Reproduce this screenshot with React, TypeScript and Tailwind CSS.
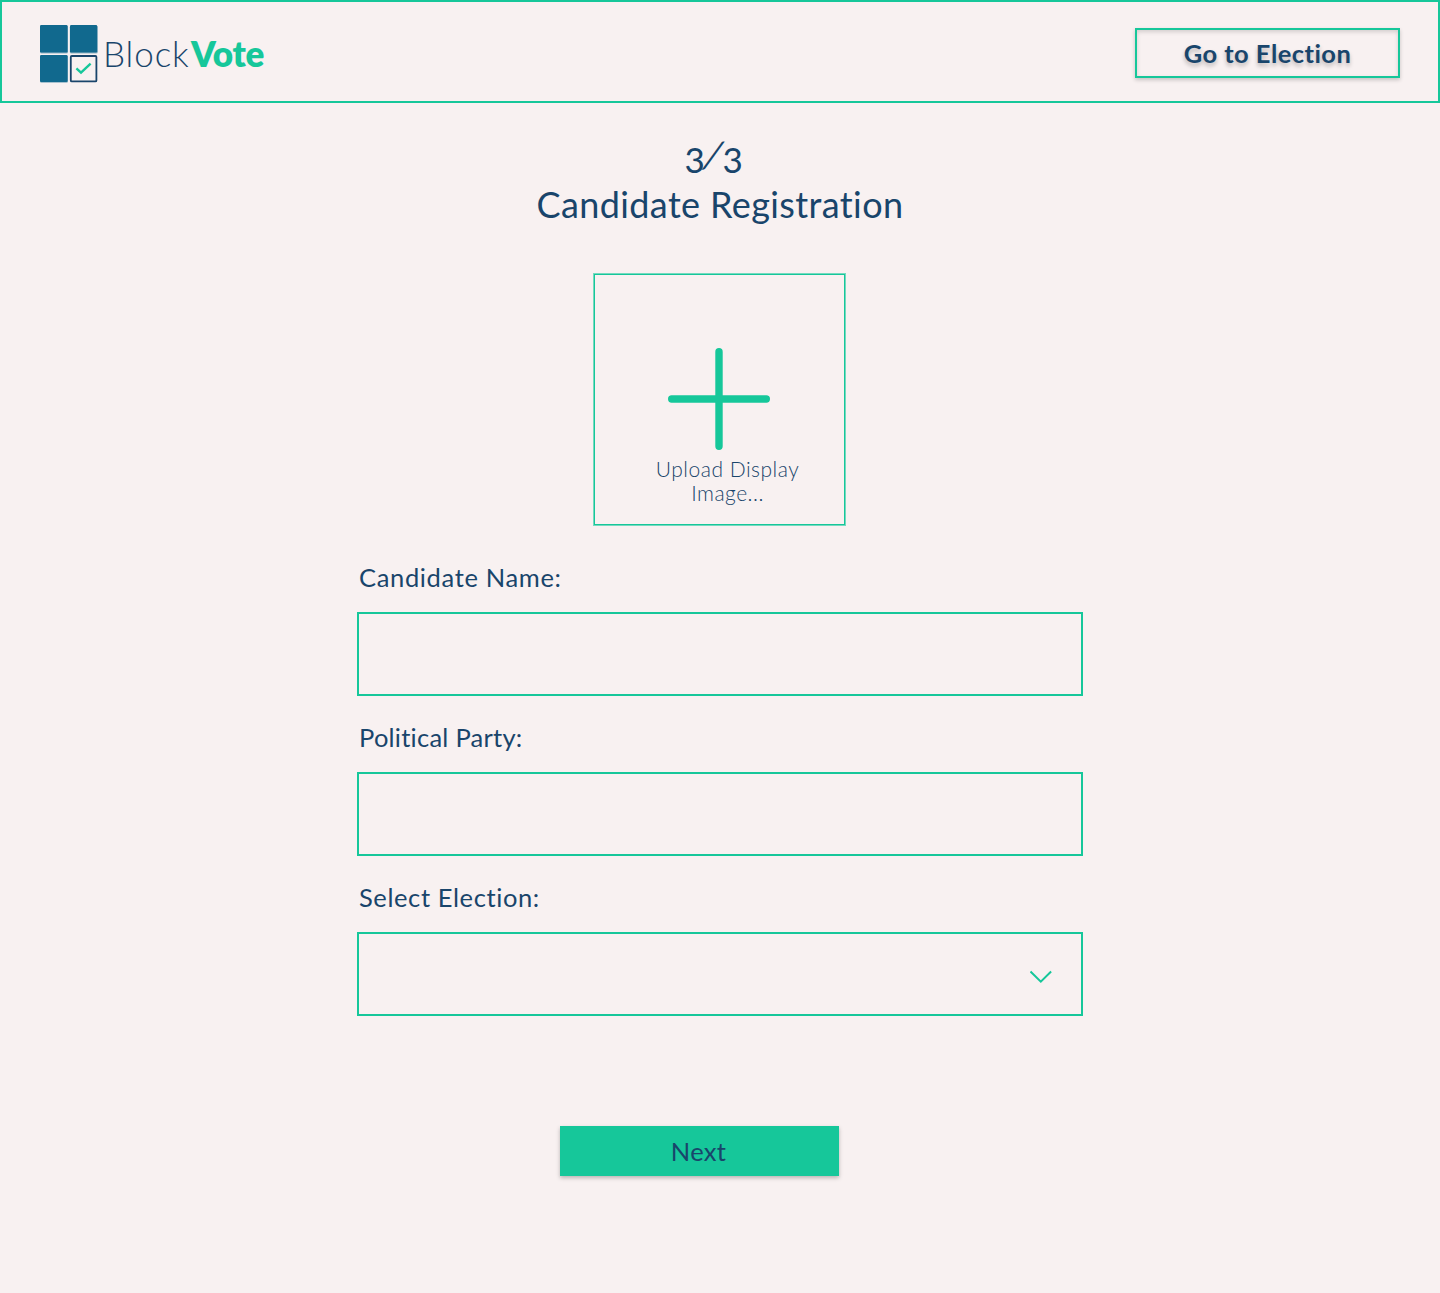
import React from "react";

function Logo() {
  return (
    <div className="flex items-center">
      <svg width="58" height="59" viewBox="0 0 58 59" fill="none">
        <rect x="0" y="0.8" width="28" height="27.8" rx="1.5" fill="#8fb3c4" />
        <rect x="29.8" y="0.8" width="28" height="27.8" rx="1.5" fill="#8fb3c4" />
        <rect x="0" y="30.4" width="28" height="27.4" rx="1.5" fill="#8fb3c4" />
        <rect x="0" y="0" width="27.6" height="27.4" rx="1.2" fill="#11698e" />
        <rect x="30" y="0" width="27.2" height="27.4" rx="1.2" fill="#11698e" />
        <rect x="0" y="30" width="27.6" height="27" rx="1.2" fill="#11698e" />
        <rect x="30.8" y="31" width="25.6" height="25.4" rx="1" stroke="#19456b" strokeWidth="1.8" />
        <path d="M36.4 43.3 L41 47.6 L50.6 38.6" stroke="#16c79a" strokeWidth="2.4" />
      </svg>
      <div className="mb-[3px] ml-[5px] flex text-[35px] leading-[44px] whitespace-nowrap">
        <span className="w-[88px] font-light text-[#19456b] tracking-[0.9px]">Block</span>
        <span className="font-extrabold text-[#16c79a] tracking-[-0.2px]">Vote</span>
      </div>
    </div>
  );
}

function Field({ label, tracking, children }: { label: string; tracking: string; children?: React.ReactNode }) {
  return (
    <div className="flex h-[160px] flex-col">
      <label className={`h-[50px] pl-[2px] leading-[31px] whitespace-nowrap ${tracking}`}>{label}</label>
      <div className="flex h-[84px] items-center justify-end border-2 border-[#16c79a] pr-[29px]">{children}</div>
    </div>
  );
}

export default function App() {
  return (
    <div className="flex h-[1293px] w-[1440px] flex-col bg-[#f8f1f1] font-['Lato',sans-serif] text-[#19456b] [font-variant-ligatures:none]">
      <header className="flex h-[103px] shrink-0 items-start justify-between border-2 border-[#16c79a] pl-[38px] pr-[38px]">
        <div className="mt-[23px]">
          <Logo />
        </div>
        <button className="mt-[26px] h-[50px] w-[265px] border-2 border-[#16c79a] text-[25.5px] leading-[47px] font-bold tracking-[0.45px] whitespace-nowrap shadow-[0_2px_4px_rgba(0,0,0,0.2),inset_0_2px_4px_rgba(0,0,0,0.15)] [text-shadow:0_3px_4px_rgba(0,0,0,0.25)]">
          Go to Election
        </button>
      </header>
      <main className="flex flex-col items-center">
        <h1 className="mt-[27px] flex flex-col items-center text-[36px] leading-[49px] font-normal">
          <span className="mr-[14px] flex">
            <span className="w-[19px] translate-y-[5px] text-[35px]">3</span>
            <span className="inline-block w-[19px] -skew-x-[18deg] text-center">/</span>
            <span className="w-[19px] translate-y-[5px] text-[35px]">3</span>
          </span>
          <span className="translate-y-px tracking-[0.38px] whitespace-nowrap">Candidate Registration</span>
        </h1>
        <button className="mt-[45px] mr-px flex h-[253px] w-[253px] flex-col items-center border border-[#74dabf] pt-px shadow-[inset_0_0_0_1px_#16c79a]">
          <svg className="mt-[73px] mr-px" width="102" height="102" viewBox="0 0 102 102">
            <path d="M51 3.7V98.3M3.7 51H98.3" stroke="#16c79a" strokeWidth="7.4" strokeLinecap="round" />
          </svg>
          <span className="mt-[7px] ml-[16px] text-[21px] leading-[24px] font-light tracking-[0.5px]">
            Upload Display
            <br />
            Image...
          </span>
        </button>
        <form className="mt-[36px] flex w-[726px] flex-col">
          <Field label="Candidate Name:" tracking="text-[25.5px] tracking-[0.65px]" />
          <Field label="Political Party:" tracking="text-[25.5px] tracking-[0.25px]" />
          <Field label="Select Election:" tracking="text-[25.5px] tracking-[0.6px]">
            <svg className="mt-[5px]" width="22" height="14" viewBox="0 0 22 14" fill="none">
              <path d="M0.5 1.5 L10.8 11.7 L21.1 1.5" stroke="#16c79a" strokeWidth="2" />
            </svg>
          </Field>
        </form>
        <button className="mt-[84px] mr-[41px] h-[50px] w-[279px] bg-[#16c79a] pt-px pr-[2px] text-[25.5px] leading-[49px] tracking-[0.3px] shadow-[0_2px_4px_rgba(0,0,0,0.25)]">
          Next
        </button>
      </main>
    </div>
  );
}
